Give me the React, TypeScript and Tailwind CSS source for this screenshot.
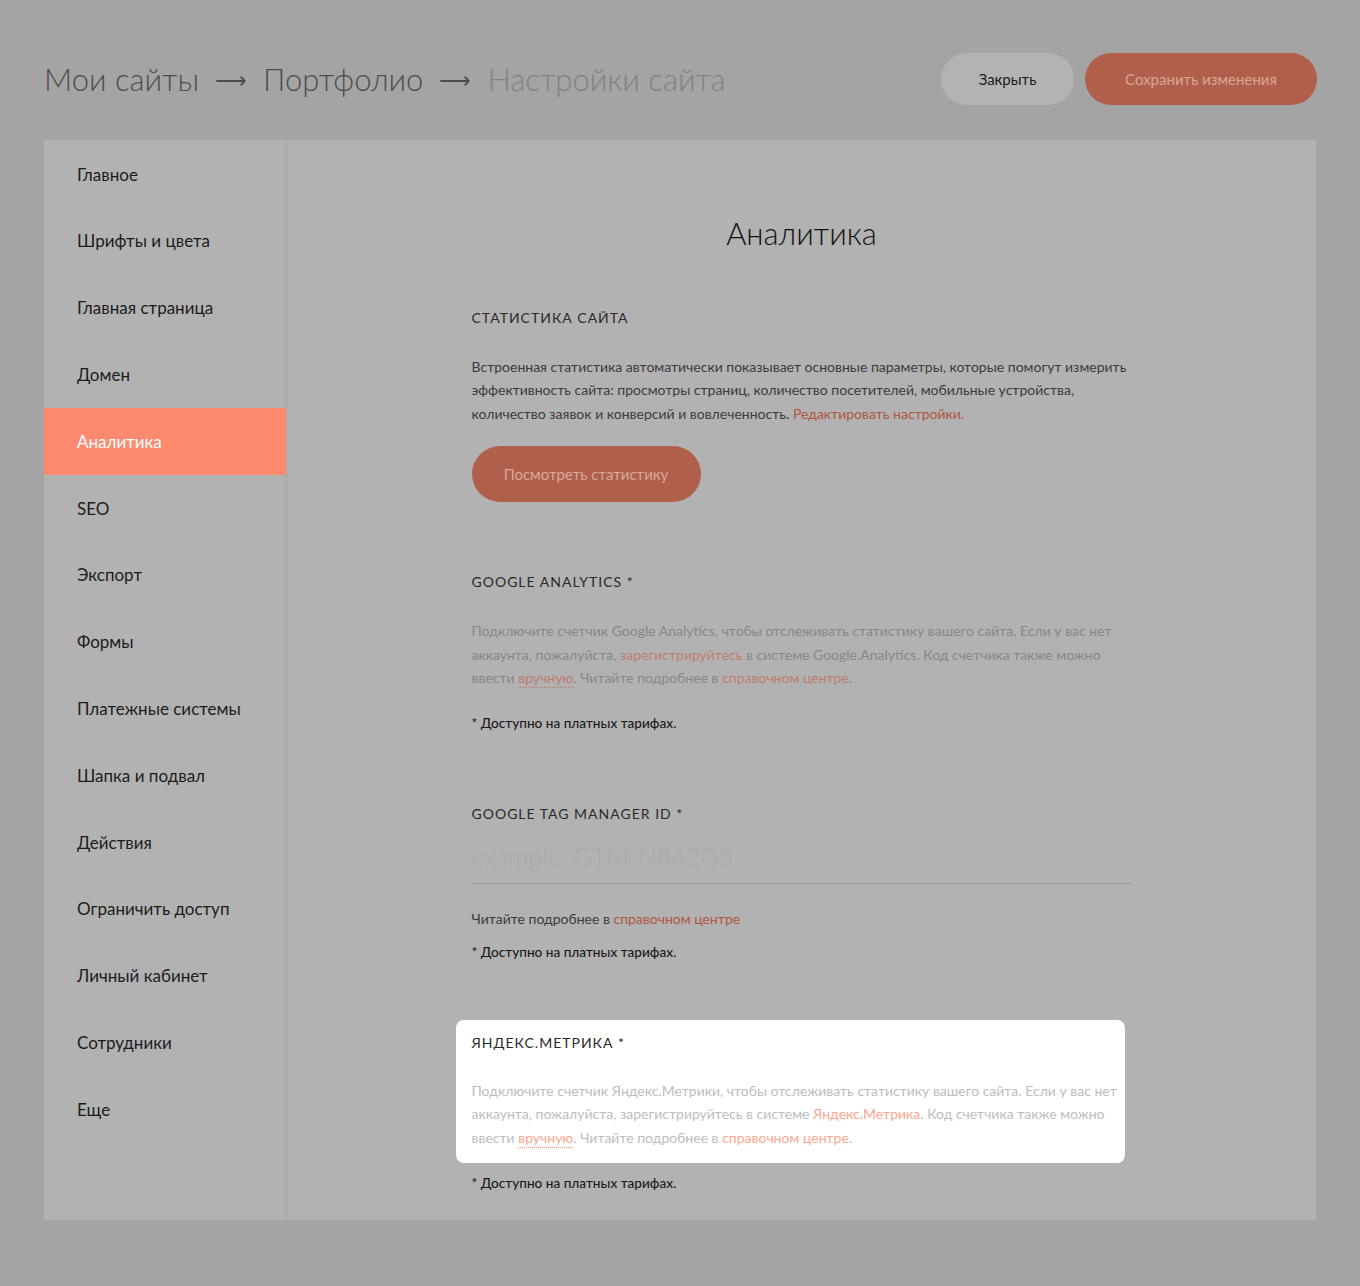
import React from "react"

const font = { fontFamily: '"Lato", "Liberation Sans", sans-serif' }

const menu = [
  "Главное",
  "Шрифты и цвета",
  "Главная страница",
  "Домен",
  "Аналитика",
  "SEO",
  "Экспорт",
  "Формы",
  "Платежные системы",
  "Шапка и подвал",
  "Действия",
  "Ограничить доступ",
  "Личный кабинет",
  "Сотрудники",
  "Еще",
]

function Note() {
  return <p className="text-[13.6px] text-[#1a1a1a] font-medium">* Доступно на платных тарифах.</p>
}

function SectionTitle({ children }: { children: React.ReactNode }) {
  return <h3 className="text-[14px] tracking-[1px] uppercase text-[#2a2a2a]">{children}</h3>
}

export default function App() {
  return (
    <div className="min-h-[1286px] bg-[#a4a4a4] px-[44px] pt-[53px] pb-[66px]" style={font}>
      <header className="flex items-center justify-between h-[52px]">
        <div className="flex items-center text-[31px] font-light">
          <span className="text-[#4d4d4d]">Мои сайты</span>
          <span className="mx-[16px] text-[#4d4d4d] text-[22px]">⟶</span>
          <span className="text-[#4d4d4d]">Портфолио</span>
          <span className="mx-[16px] text-[#4d4d4d] text-[22px]">⟶</span>
          <span className="text-[#828282]">Настройки сайта</span>
        </div>
        <div className="flex items-center gap-[11px] mr-[-1px]">
          <button className="h-[52px] w-[133px] rounded-full bg-[#b3b3b3] text-[15px] text-[#1a1a1a]">Закрыть</button>
          <button className="h-[52px] w-[232px] rounded-full bg-[#b0604a] text-[15px] text-[#d8a696]">
            Сохранить изменения
          </button>
        </div>
      </header>

      <div className="mt-[35px] flex bg-[#b2b2b2] min-h-[1080px]">
        <nav className="w-[243px] shrink-0 border-r border-[#a5a5a5] pt-[1px]">
          {menu.map((m) => (
            <div
              key={m}
              className={
                m === "Аналитика"
                  ? "h-[66.8px] flex items-center pl-[33px] text-[17px] bg-[#fd8a6e] text-white"
                  : "h-[66.8px] flex items-center pl-[33px] text-[17px] text-[#1c1c1c]"
              }
            >
              {m}
            </div>
          ))}
        </nav>

        <main className="flex-1 flex justify-center pt-[70px] pb-[20px]">
          <div className="w-[660px]">
            <h1 className="text-center text-[31px] font-light text-[#111]">Аналитика</h1>

            <div className="mt-[50px]">
              <SectionTitle>Статистика сайта</SectionTitle>
              <p className="mt-[27px] whitespace-nowrap text-[14px] leading-[23.5px] text-[#3b3b3b]">
                Встроенная статистика автоматически показывает основные параметры, которые помогут измерить
                <br />
                эффективность сайта: просмотры страниц, количество посетителей, мобильные устройства,
                <br />
                количество заявок и конверсий и вовлеченность.{" "}
                <span className="text-[#b0553f]">Редактировать настройки.</span>
              </p>
              <button className="mt-[21px] h-[56px] w-[229px] rounded-full bg-[#b0604a] text-[15px] text-[#d8a898]">
                Посмотреть статистику
              </button>
            </div>

            <div className="mt-[69px]">
              <SectionTitle>Google Analytics *</SectionTitle>
              <p className="mt-[27px] whitespace-nowrap text-[14px] leading-[23.5px] text-[#878787]">
                Подключите счетчик Google Analytics, чтобы отслеживать статистику вашего сайта. Если у вас нет
                <br />
                аккаунта, пожалуйста, <span className="text-[#bf7c6c]">зарегистрируйтесь</span> в системе
                Google.Analytics. Код счетчика также можно
                <br />
                ввести{" "}
                <span className="text-[#bf7c6c] underline decoration-dotted underline-offset-4">вручную</span>. Читайте
                подробнее в <span className="text-[#bf7c6c]">справочном центре</span>.
              </p>
              <div className="mt-[23px]">
                <Note />
              </div>
            </div>

            <div className="mt-[70px]">
              <SectionTitle>Google Tag Manager ID *</SectionTitle>
              <div className="mt-[14px] border-b border-[#9c9c9c] pb-[8px] text-[25px] font-light text-[#aaaaaa]">
                example: GTM-N842GS
              </div>
              <p className="mt-[24px] text-[14px] text-[#3b3b3b]">
                Читайте подробнее в <span className="text-[#b0553f]">справочном центре</span>
              </p>
              <div className="mt-[13px]">
                <Note />
              </div>
            </div>

            <div className="mt-[57px] -ml-[16px] w-[669px] rounded-[8px] bg-white px-[16px] pt-[12px] pb-[14px]">
              <SectionTitle>Яндекс.Метрика *</SectionTitle>
              <p className="mt-[26px] whitespace-nowrap text-[14px] leading-[23.5px] text-[#bdbdbd]">
                Подключите счетчик Яндекс.Метрики, чтобы отслеживать статистику вашего сайта. Если у вас нет
                <br />
                аккаунта, пожалуйста, зарегистрируйтесь в системе{" "}
                <span className="text-[#ffa68e]">Яндекс.Метрика</span>. Код счетчика также можно
                <br />
                ввести{" "}
                <span className="text-[#ffa68e] underline decoration-dotted underline-offset-4">вручную</span>. Читайте
                подробнее в <span className="text-[#ffa68e]">справочном центре</span>.
              </p>
            </div>
            <div className="mt-[10px]">
              <Note />
            </div>
          </div>
        </main>
      </div>
    </div>
  )
}
